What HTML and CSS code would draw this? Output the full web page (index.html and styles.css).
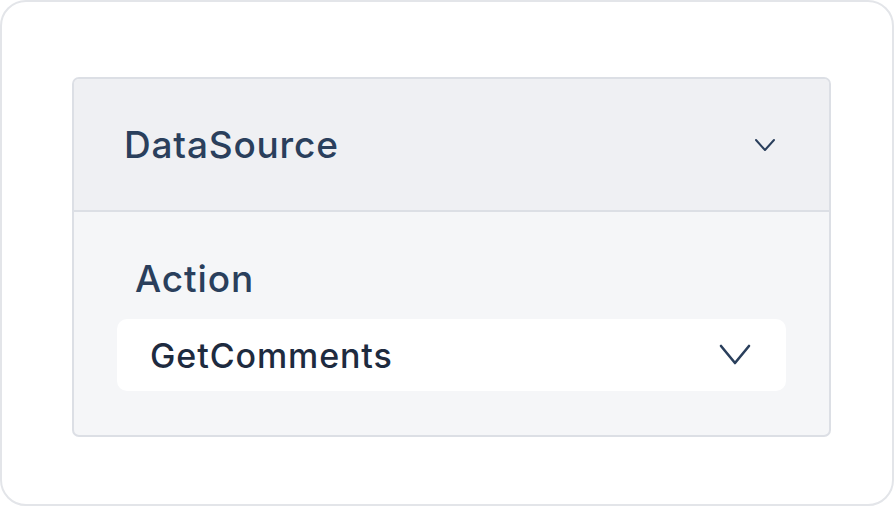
FILE: index.html
```html
<!DOCTYPE html>
<html>
<head>
<meta charset="utf-8">
<link rel="stylesheet" href="styles.css">
</head>
<body>
<div class="frame">
  <div class="card">
    <div class="card-header">
      <span class="title">DataSource</span>
      <svg class="chev-sm" width="22" height="16" viewBox="0 0 22 16"><path d="M2 3 L11 13 L20 3" fill="none" stroke="#2a3f5c" stroke-width="2" stroke-linecap="round" stroke-linejoin="round"/></svg>
    </div>
    <div class="card-body">
      <div class="label">Action</div>
      <div class="select">
        <span class="value">GetComments</span>
        <svg class="chev-lg" width="34" height="24" viewBox="0 0 34 24"><path d="M3 3 L17 20 L31 3" fill="none" stroke="#2a3f5c" stroke-width="2.6" stroke-linecap="round" stroke-linejoin="round"/></svg>
      </div>
    </div>
  </div>
</div>
</body>
</html>
```
FILE: styles.css
```css
* { box-sizing: border-box; }
html, body { margin: 0; padding: 0; background: #ffffff; }
body { font-family: Inter, "Noto Sans", sans-serif; }
.frame {
  width: 894px;
  height: 506px;
  border: 2px solid #e3e5e9;
  border-radius: 26px;
  background: #ffffff;
  padding: 75px 0 0 70px;
}
.card {
  width: 759px;
  height: 360px;
  border: 2px solid #dcdfe5;
  border-radius: 7px;
  overflow: hidden;
  background: #f5f6f8;
  display: flex;
  flex-direction: column;
}
.card-header {
  height: 133px;
  background: #eff0f3;
  border-bottom: 2px solid #dcdfe5;
  display: flex;
  align-items: center;
  justify-content: space-between;
  padding: 0 53px 0 50px;
  flex-shrink: 0;
}
.title {
  font-size: 37px;
  font-weight: 500;
  color: #2a3f5c;
  letter-spacing: 0.8px;
  line-height: 46px;
}
.card-body {
  flex: 1;
  padding: 44px 43px 0 43px;
}
.label {
  font-size: 37px;
  font-weight: 500;
  color: #2a3f5c;
  padding-left: 18px;
  line-height: 46px;
  letter-spacing: 0.9px;
}
.select {
  margin-top: 17px;
  height: 72px;
  background: #ffffff;
  border-radius: 10px;
  display: flex;
  align-items: center;
  justify-content: space-between;
  padding: 0 34px 0 33px;
}
.value {
  font-size: 34px;
  font-weight: 500;
  color: #1e2b3f;
  letter-spacing: 0.9px;
}
```
